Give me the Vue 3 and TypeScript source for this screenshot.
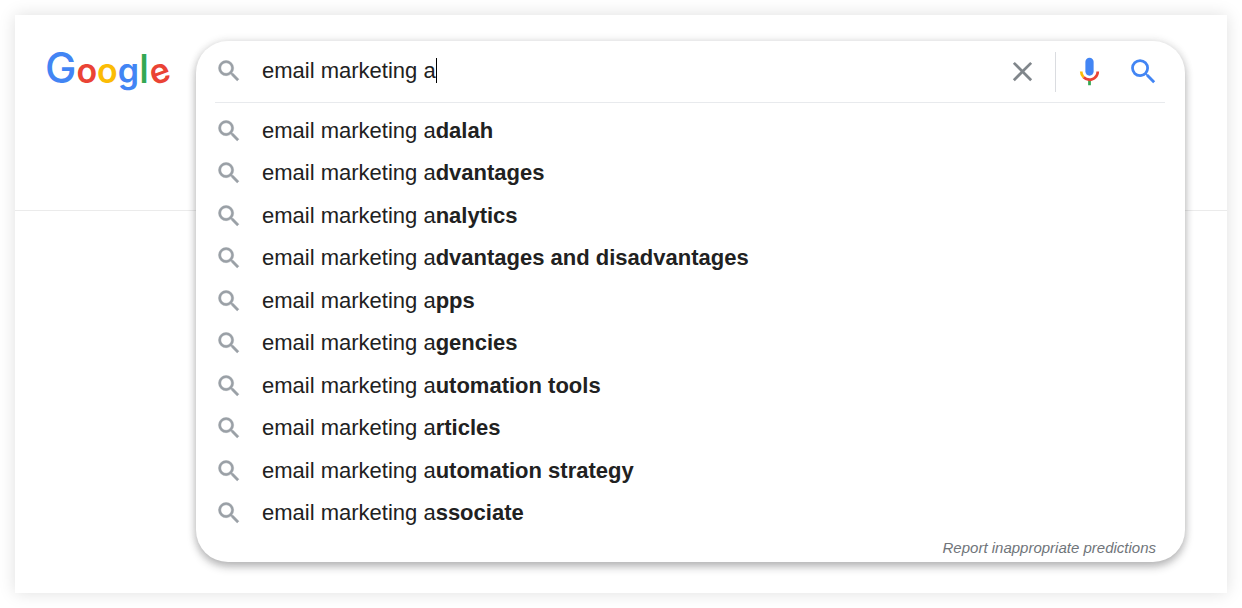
<script setup lang="ts">
import { ref } from 'vue'

const query = ref('email marketing a')
const typed = 'email marketing a'
const completions: string[] = [
  'dalah',
  'dvantages',
  'nalytics',
  'dvantages and disadvantages',
  'pps',
  'gencies',
  'utomation tools',
  'rticles',
  'utomation strategy',
  'ssociate',
]
const brand = [
  { letter: 'G', tone: 'blue capital' },
  { letter: 'o', tone: 'red' },
  { letter: 'o', tone: 'yellow' },
  { letter: 'g', tone: 'blue' },
  { letter: 'l', tone: 'green ascender' },
  { letter: 'e', tone: 'red tilt' },
]
const lens =
  'M15.5 14h-.79l-.28-.27A6.47 6.47 0 0 0 16 9.5 6.5 6.5 0 1 0 9.5 16c1.61 0 3.09-.59 4.23-1.57l.27.28v.79l5 4.99L20.49 19l-4.99-5zm-6 0a4.5 4.5 0 1 1 0-9 4.5 4.5 0 0 1 0 9z'
</script>

<template>
  <main class="sheet">
    <div class="rule"></div>
    <a class="logo" href="#" aria-label="Google"><span
      v-for="(part, i) in brand" :key="i" :class="part.tone">{{ part.letter }}</span></a>
    <form class="panel" role="search" @submit.prevent>
      <div class="bar">
        <label class="field" for="query">
          <svg class="lens" viewBox="0 0 24 24" aria-hidden="true"><path :d="lens" /></svg>
          <input id="query" v-model="query" type="text" aria-label="Search" autocomplete="off" />
          <span class="caret"></span>
        </label>
        <button class="clear" type="button" aria-label="Clear" @click="query = ''">
          <svg viewBox="0 0 24 24" aria-hidden="true"><path d="M19 6.41 17.59 5 12 10.59 6.41 5 5 6.41 10.59 12 5 17.59 6.41 19 12 13.41 17.59 19 19 17.59 13.41 12z" /></svg>
        </button>
        <button class="mic" type="button" aria-label="Search by voice">
          <svg viewBox="0 0 24 24" aria-hidden="true">
            <path fill="#4285f4" d="M12 15c1.66 0 3-1.31 3-2.97V4.96C15 3.3 13.66 2 12 2S9 3.3 9 4.96v7.07C9 13.69 10.34 15 12 15z" />
            <path fill="#34a853" d="M11 18.08h2V22h-2z" />
            <path fill="#fbbc05" d="M7.05 16.87A6.84 6.84 0 0 1 5 12h2c0 1.45.56 2.42 1.47 3.38z" />
            <path fill="#ea4335" d="M12 16.93a4.97 4.97 0 0 1-3.54-1.55l-1.41 1.49A7 7 0 0 0 12 19c3.87 0 6.99-3.13 6.99-7h-2c0 2.76-2.23 4.93-4.99 4.93z" />
          </svg>
        </button>
        <button class="go" type="submit" aria-label="Search">
          <svg viewBox="0 0 24 24" aria-hidden="true"><path :d="lens" /></svg>
        </button>
      </div>
      <ul class="list">
        <li v-for="tail in completions" :key="tail">
          <svg class="lens" viewBox="0 0 24 24" aria-hidden="true"><path :d="lens" /></svg>
          <a href="#">{{ typed }}<b>{{ tail }}</b></a>
        </li>
      </ul>
      <a class="report" href="#">Report inappropriate predictions</a>
    </form>
  </main>
</template>

<style>
body {
  background: #fff;
}
</style>

<style scoped>
.sheet {
  display: grid;
  grid-template-columns: 181px minmax(0, 1fr) 42px;
  grid-template-rows: 196px auto;
  margin: 15px;
  background: #fff;
  box-shadow: 0 0 16px rgba(0, 0, 0, 0.13);
  font-family: "Liberation Sans", Arial, sans-serif;
  color: #212121;
}
.rule {
  grid-area: 1 / 1 / 2 / -1;
  border-bottom: 1px solid #ebebeb;
}
.logo {
  grid-area: 1 / 1;
  justify-self: start;
  align-self: start;
  margin: 25px 0 0 30px;
  font: 600 34px/56px Inter, sans-serif;
  text-decoration: none;
}
.logo span {
  display: inline-block;
}
.logo .capital {
  font-size: 42px;
  font-weight: 500;
}
.logo .ascender {
  font-size: 40px;
  font-weight: 500;
}
.blue { color: #4285f4; }
.red { color: #ea4335; }
.yellow { color: #fbbc05; }
.green { color: #34a853; }
.tilt { transform: rotate(-20deg); }
.panel {
  grid-area: 1 / 2 / 3 / 3;
  margin: 26px 0 31px;
  border-radius: 32px;
  background: #fff;
  box-shadow: 0 5px 8px rgba(32, 33, 36, 0.28), 0 0 8px rgba(32, 33, 36, 0.14);
}
.bar {
  display: flex;
  align-items: center;
  height: 61px;
  margin: 0 20px 0 19px;
  border-bottom: 1px solid #e8eaed;
}
svg {
  display: block;
  width: 33px;
  height: 33px;
  fill: currentColor;
}
.lens {
  flex: none;
  width: 28px;
  height: 28px;
  margin-right: 19px;
  color: #9aa0a6;
  stroke: currentColor;
  stroke-width: 0.4;
}
.field {
  display: flex;
  flex: 1;
  align-items: center;
  min-width: 0;
  padding-bottom: 2px;
  cursor: text;
}
input {
  field-sizing: content;
  min-width: 0;
  height: 32px;
  padding: 0;
  border: 0;
  outline: 0;
  background: none;
  color: inherit;
  font: 22px/32px "Liberation Sans", Arial, sans-serif;
  caret-color: transparent;
}
.caret {
  width: 1px;
  height: 25px;
  background: #000;
}
button {
  display: flex;
  align-items: center;
  justify-content: center;
  height: 40px;
  padding: 0;
  border: 0;
  background: none;
}
.clear {
  width: 66px;
  border-right: 1px solid #dadce0;
  color: #80868b;
}
.mic {
  width: 66px;
}
.go {
  width: 43px;
  color: #4285f4;
}
.list {
  display: grid;
  grid-auto-rows: 42px 43px;
  margin: 0;
  padding: 7px 19px 0;
  list-style: none;
}
li {
  display: flex;
  align-items: center;
  height: 42px;
  font-size: 22px;
  line-height: 42px;
}
li a {
  color: inherit;
  text-decoration: none;
}
.report {
  display: block;
  padding: 4px 29px 5px;
  color: #70757a;
  font-size: 15px;
  font-style: italic;
  line-height: 18px;
  text-align: right;
  text-decoration: none;
}
</style>
